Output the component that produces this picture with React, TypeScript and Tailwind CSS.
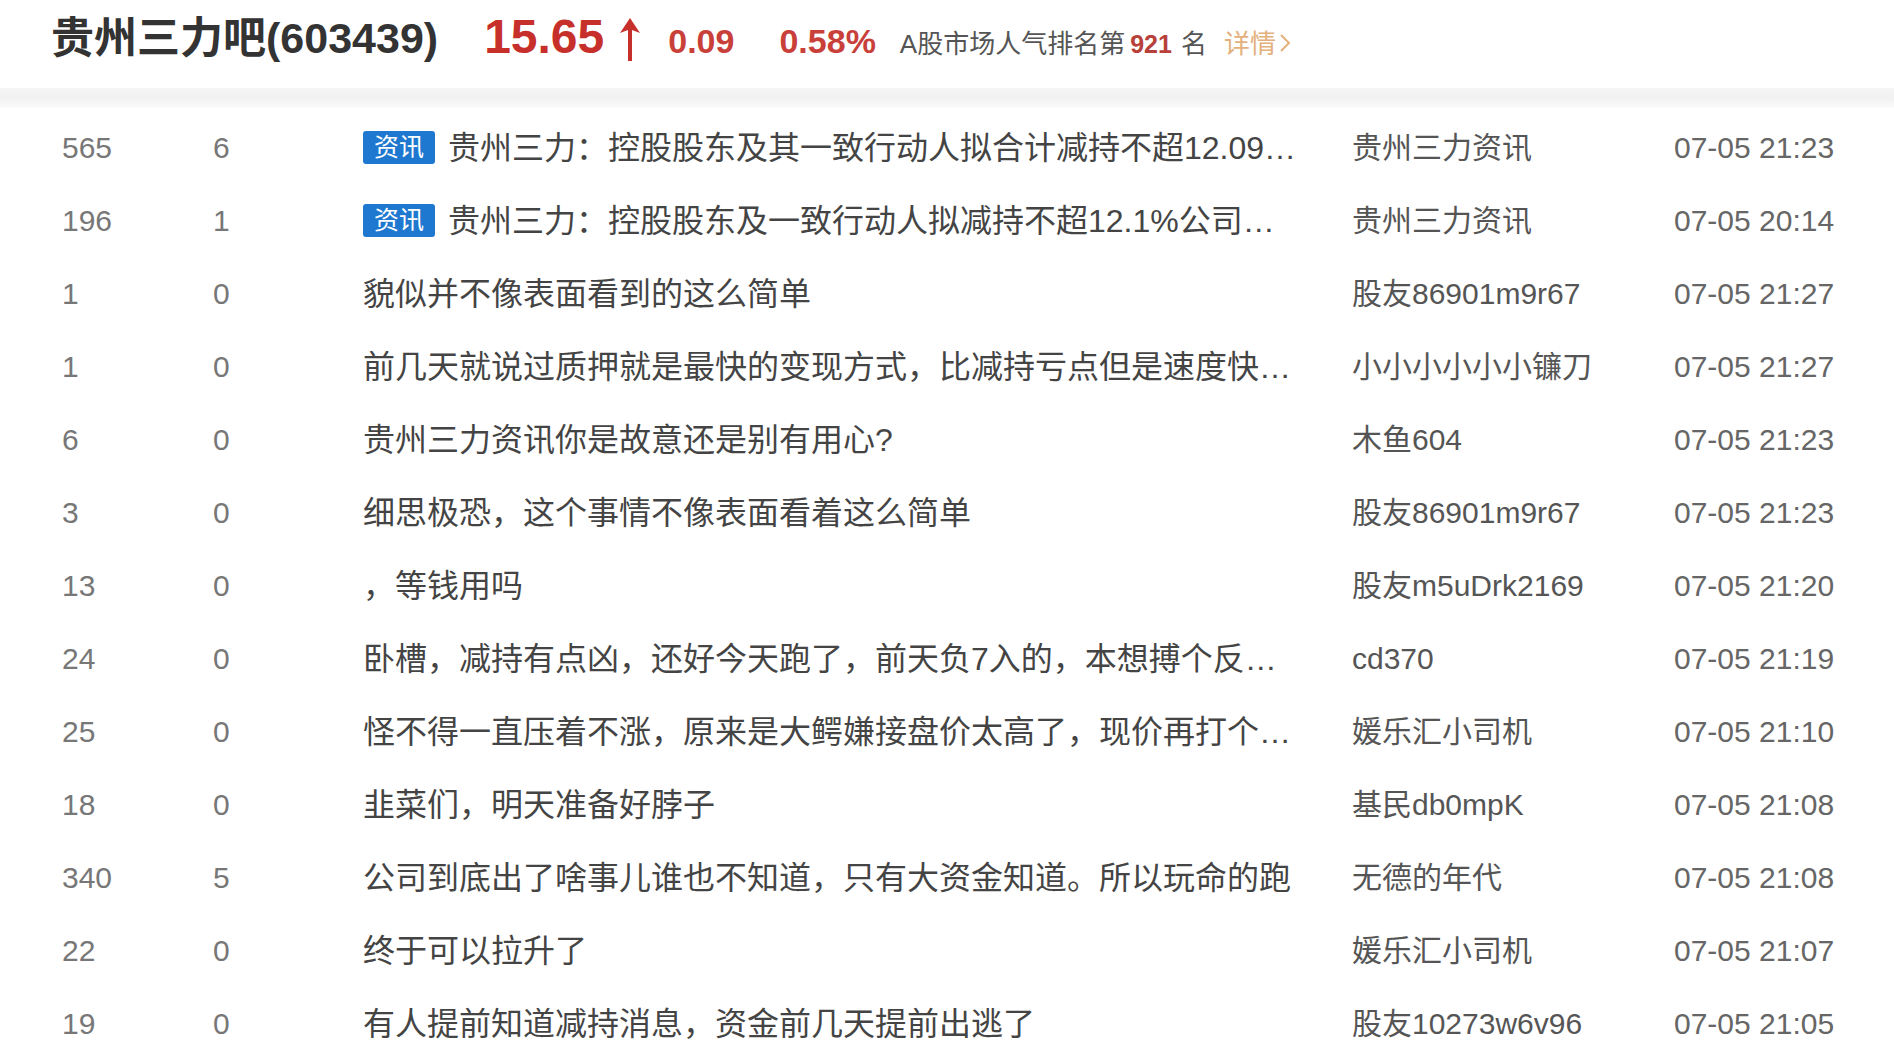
import React from "react";

type Row = {
  reads: string;
  replies: string;
  title: string;
  news?: boolean;
  author: string;
  time: string;
};

const rows: Row[] = [
  { reads: "565", replies: "6", news: true, title: "贵州三力：控股股东及其一致行动人拟合计减持不超12.09…", author: "贵州三力资讯", time: "07-05 21:23" },
  { reads: "196", replies: "1", news: true, title: "贵州三力：控股股东及一致行动人拟减持不超12.1%公司…", author: "贵州三力资讯", time: "07-05 20:14" },
  { reads: "1", replies: "0", title: "貌似并不像表面看到的这么简单", author: "股友86901m9r67", time: "07-05 21:27" },
  { reads: "1", replies: "0", title: "前几天就说过质押就是最快的变现方式，比减持亏点但是速度快…", author: "小小小小小小镰刀", time: "07-05 21:27" },
  { reads: "6", replies: "0", title: "贵州三力资讯你是故意还是别有用心?", author: "木鱼604", time: "07-05 21:23" },
  { reads: "3", replies: "0", title: "细思极恐，这个事情不像表面看着这么简单", author: "股友86901m9r67", time: "07-05 21:23" },
  { reads: "13", replies: "0", title: "，等钱用吗", author: "股友m5uDrk2169", time: "07-05 21:20" },
  { reads: "24", replies: "0", title: "卧槽，减持有点凶，还好今天跑了，前天负7入的，本想搏个反…", author: "cd370", time: "07-05 21:19" },
  { reads: "25", replies: "0", title: "怪不得一直压着不涨，原来是大鳄嫌接盘价太高了，现价再打个…", author: "媛乐汇小司机", time: "07-05 21:10" },
  { reads: "18", replies: "0", title: "韭菜们，明天准备好脖子", author: "基民db0mpK", time: "07-05 21:08" },
  { reads: "340", replies: "5", title: "公司到底出了啥事儿谁也不知道，只有大资金知道。所以玩命的跑", author: "无德的年代", time: "07-05 21:08" },
  { reads: "22", replies: "0", title: "终于可以拉升了", author: "媛乐汇小司机", time: "07-05 21:07" },
  { reads: "19", replies: "0", title: "有人提前知道减持消息，资金前几天提前出逃了", author: "股友10273w6v96", time: "07-05 21:05" },
];

const App = () => {
  return (
    <div className="h-screen w-full overflow-hidden bg-white font-['Liberation_Sans','Noto_Sans_CJK_SC',sans-serif]">
      {/* header bar */}
      <header className="flex h-[88px] items-center pb-[14px] pl-[51px]">
        <div className="flex items-baseline whitespace-nowrap">
          <span className="text-[43px] font-bold text-[#333]">贵州三力吧(603439)</span>
          <span className="ml-[46px] text-[48px] font-bold text-[#c62f2a]">15.65</span>
          <svg className="ml-[13px] translate-y-[8px]" width="26" height="44" viewBox="0 0 26 44">
            <path d="M13 1 L3 16 L11 13 L11 44 L15 44 L15 13 L23 16 Z" fill="#c62f2a" />
          </svg>
          <span className="ml-[25px] text-[34px] font-bold text-[#c9403a]">0.09</span>
          <span className="ml-[45px] text-[34px] font-bold text-[#c9403a]">0.58%</span>
          <span className="ml-[24px] text-[26px] text-[#555]">A股市场人气排名第</span>
          <span className="ml-[5px] text-[25px] font-bold text-[#b8403a]">921</span>
          <span className="ml-[9px] text-[26px] text-[#555]">名</span>
          <span className="ml-[17px] text-[26px] text-[#e4b07c]">详情</span>
          <svg className="ml-[3px]" width="12" height="20" viewBox="0 0 12 20">
            <path d="M2 2 L10 10 L2 18" fill="none" stroke="#e4b07c" strokeWidth="2" />
          </svg>
        </div>
      </header>
      <div className="h-[20px] bg-linear-to-b from-[#f6f6f6] via-[#f1f1f1] to-[#fbfbfb]" />

      {/* post list */}
      <div className="pt-[3px]">
        {rows.map((r, i) => (
          <div
            key={i}
            className="grid h-[73px] grid-cols-[151px_150px_989px_322px_1fr] items-center pl-[62px] whitespace-nowrap"
          >
            <span className="text-[30px] text-[#777]">{r.reads}</span>
            <span className="text-[30px] text-[#777]">{r.replies}</span>
            <div className="flex items-center overflow-hidden">
              {r.news && (
                <span className="mr-[13px] flex h-[33px] items-center rounded-[3px] bg-[#1e78d0] px-[11px] text-[25px] text-white">
                  资讯
                </span>
              )}
              <span className="text-[32px] text-[#444]">{r.title}</span>
            </div>
            <span className="text-[30px] text-[#555]">{r.author}</span>
            <span className="text-[30px] text-[#666]">{r.time}</span>
          </div>
        ))}
      </div>
    </div>
  );
};

export default App;
